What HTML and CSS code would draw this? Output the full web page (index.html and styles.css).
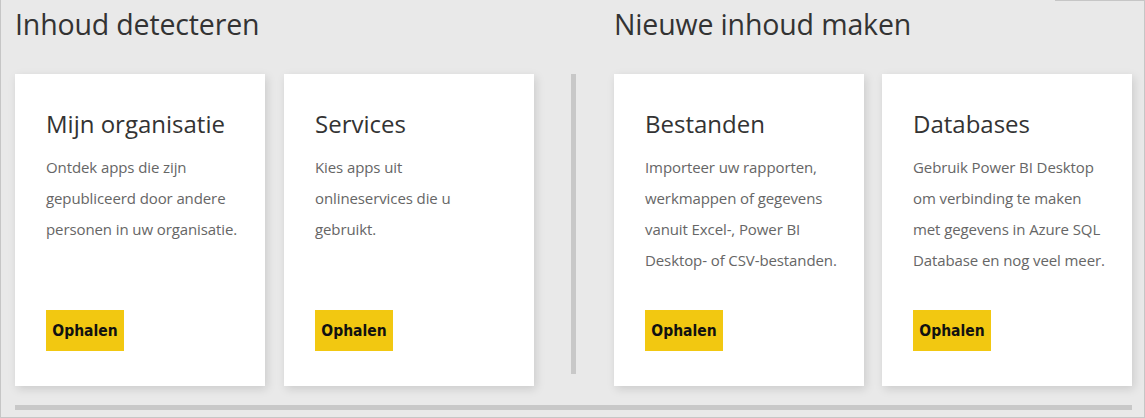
FILE: index.html
```html
<!DOCTYPE html>
<html lang="nl">
<head>
<meta charset="utf-8">
<link rel="stylesheet" href="styles.css">
</head>
<body>
<div class="frame">
  <div class="row">
    <section class="group">
      <h1 class="group-title">Inhoud detecteren</h1>
      <div class="cards">
        <div class="card">
          <h2 class="card-title">Mijn organisatie</h2>
          <p class="card-text">Ontdek apps die zijn gepubliceerd door andere personen in uw organisatie.</p>
          <button class="btn">Ophalen</button>
        </div>
        <div class="card">
          <h2 class="card-title">Services</h2>
          <p class="card-text">Kies apps uit<br>onlineservices die u gebruikt.</p>
          <button class="btn">Ophalen</button>
        </div>
      </div>
    </section>
    <div class="divider"></div>
    <section class="group">
      <h1 class="group-title">Nieuwe inhoud maken</h1>
      <div class="cards cards-b">
        <div class="card">
          <h2 class="card-title">Bestanden</h2>
          <p class="card-text">Importeer uw rapporten, werkmappen of gegevens vanuit Excel-, Power BI Desktop- of CSV-bestanden.</p>
          <button class="btn">Ophalen</button>
        </div>
        <div class="card">
          <h2 class="card-title">Databases</h2>
          <p class="card-text">Gebruik Power BI Desktop om verbinding te maken met gegevens in Azure SQL Database en nog veel meer.</p>
          <button class="btn">Ophalen</button>
        </div>
      </div>
    </section>
  </div>
  <div class="hbar"></div>
</div>
</body>
</html>
```

FILE: styles.css
```css
* { box-sizing: border-box; }
html, body { margin: 0; padding: 0; }
body {
  background: #e9e9e9;
  font-family: "Open Sans", "Noto Sans", sans-serif;
}
.frame {
  position: relative;
  width: 1145px;
  height: 418px;
  border-left: 1px solid #c6c6c6;
  border-right: 1px solid #c6c6c6;
  border-bottom: 1px solid #c6c6c6;
  padding: 0 0 0 14px;
}
.frame::after {
  content: "";
  position: absolute;
  top: 0;
  right: -1px;
  width: 90px;
  height: 1px;
  background: #c6c6c6;
}
.row {
  display: flex;
  align-items: flex-start;
}
.group-title {
  margin: 0;
  height: 74px;
  padding-top: 4px;
  font-size: 28.5px;
  line-height: 40px;
  font-weight: 400;
  color: #333;
  letter-spacing: -0.15px;
}
.cards {
  display: flex;
  gap: 19px;
}
.cards-b { gap: 18px; }
.divider {
  width: 5px;
  height: 300px;
  margin: 74px 38px 0 37px;
  background: #c8c8c8;
}
.card {
  width: 250px;
  height: 312px;
  background: #fff;
  box-shadow: 2px 3px 9px rgba(0,0,0,0.13);
  padding: 30px 20px 35px 31px;
  display: flex;
  flex-direction: column;
  align-items: flex-start;
}
.card-title {
  margin: 0 0 8px 0;
  font-size: 24px;
  line-height: 40px;
  font-weight: 400;
  color: #333;
}
.card-text {
  margin: 0;
  font-size: 15px;
  line-height: 31px;
  color: #666;
  letter-spacing: -0.1px;
}
.btn {
  margin-top: auto;
  width: 78px;
  height: 41px;
  border: 0;
  padding: 0;
  background: #f2c811;
  color: #111;
  font-family: "DejaVu Sans", sans-serif;
  font-stretch: condensed;
  font-weight: 700;
  font-size: 15.5px;
}
.hbar {
  margin-top: 19px;
  width: 1117px;
  height: 5px;
  background: #c8c8c8;
}
```
